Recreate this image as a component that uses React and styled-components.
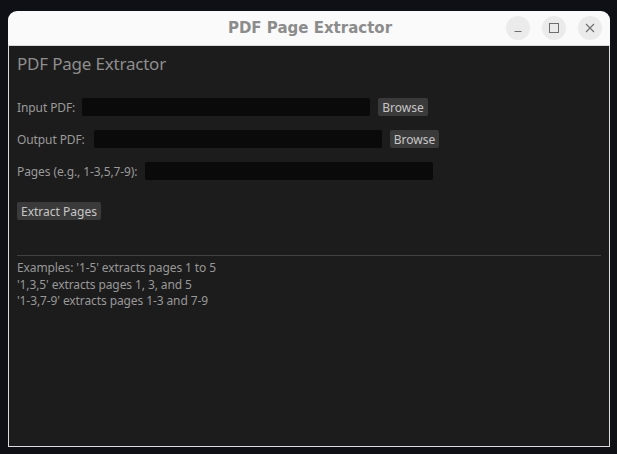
import React from 'react';
import styled, { createGlobalStyle } from 'styled-components';

const GlobalStyle = createGlobalStyle`
  html, body {
    margin: 0;
    padding: 0;
    background: #0e1015;
    height: 100%;
  }
  body {
    font-family: 'Noto Sans', 'DejaVu Sans', sans-serif;
  }
`;

const Desktop = styled.div`
  width: 617px;
  height: 454px;
  padding: 11px 0 0 8px;
  box-sizing: border-box;
`;

const Window = styled.div`
  width: 602px;
  height: 436px;
  display: flex;
  flex-direction: column;
  border-radius: 9px 9px 0 0;
  overflow: hidden;
  background: #fafafa;
`;

const TitleBar = styled.div`
  position: relative;
  height: 34px;
  flex-shrink: 0;
  display: flex;
  align-items: center;
  justify-content: center;
  border-bottom: 1px solid #d8d8d8;
`;

const Title = styled.div`
  font-family: 'DejaVu Sans', sans-serif;
  font-weight: bold;
  font-size: 15px;
  color: #8c8c8c;
  margin-left: 2px;
`;

const Controls = styled.div`
  position: absolute;
  right: 8px;
  top: 5px;
  display: flex;
  gap: 12px;
`;

const CtrlButton = styled.div`
  width: 24px;
  height: 24px;
  border-radius: 50%;
  background: #ebebeb;
  display: flex;
  align-items: center;
  justify-content: center;
`;

const Content = styled.div`
  flex: 1;
  background: #1c1c1c;
  border: 1px solid #dcdcdc;
  border-top: none;
  padding: 7px 8px 0 8px;
  display: flex;
  flex-direction: column;
  font-size: 12px;
  color: #9c9c9c;
`;

const Heading = styled.div`
  font-size: 17px;
  color: #8e8e8e;
  line-height: 22px;
  letter-spacing: -0.2px;
`;

const Form = styled.div`
  margin-top: 23px;
  display: flex;
  flex-direction: column;
  gap: 14px;
`;

const Row = styled.div`
  display: flex;
  align-items: center;
  height: 18px;
`;

const Label = styled.span`
  color: #9a9a9a;
  margin-right: ${p => p.$mr || 8}px;
  letter-spacing: -0.1px;
`;

const Entry = styled.div`
  width: 288px;
  height: 18px;
  background: #0a0a0a;
  border-radius: 2px;
`;

const Button = styled.div`
  height: 18px;
  padding: 0 4px;
  display: flex;
  align-items: center;
  background: #3a3a3a;
  color: #c6c6c6;
  border-radius: 2px;
  margin-left: ${p => p.$ml || 0}px;
`;

const ActionRow = styled.div`
  margin-top: 22px;
  display: flex;
`;

const Separator = styled.div`
  margin-top: 35px;
  height: 1px;
  background: #414141;
  width: 584px;
`;

const Examples = styled.div`
  margin-top: 4px;
  line-height: 16.5px;
  color: #989898;
  letter-spacing: -0.1px;
`;

const App = () => {
  return (
    <>
      <GlobalStyle />
      <Desktop>
        <Window>
          <TitleBar>
            <Title>PDF Page Extractor</Title>
            <Controls>
              <CtrlButton>
                <svg width="10" height="10" viewBox="0 0 10 10">
                  <path d="M1.5 8.5h7" stroke="#6e6e6e" strokeWidth="1.2" />
                </svg>
              </CtrlButton>
              <CtrlButton>
                <svg width="10" height="10" viewBox="0 0 10 10">
                  <rect x="0.5" y="0.5" width="9" height="9" fill="none" stroke="#6e6e6e" strokeWidth="1" />
                </svg>
              </CtrlButton>
              <CtrlButton>
                <svg width="10" height="10" viewBox="0 0 10 10">
                  <path d="M1 1l8 8M9 1l-8 8" stroke="#6e6e6e" strokeWidth="1.1" />
                </svg>
              </CtrlButton>
            </Controls>
          </TitleBar>
          <Content>
            <Heading>PDF Page Extractor</Heading>
            <Form>
              <Row>
                <Label $mr={7}>Input PDF:</Label>
                <Entry />
                <Button $ml={8}>Browse</Button>
              </Row>
              <Row>
                <Label $mr={9}>Output PDF:</Label>
                <Entry />
                <Button $ml={8}>Browse</Button>
              </Row>
              <Row>
                <Label>Pages (e.g., 1-3,5,7-9):</Label>
                <Entry />
              </Row>
            </Form>
            <ActionRow>
              <Button>Extract Pages</Button>
            </ActionRow>
            <Separator />
            <Examples>
              Examples: '1-5' extracts pages 1 to 5<br />
              '1,3,5' extracts pages 1, 3, and 5<br />
              '1-3,7-9' extracts pages 1-3 and 7-9
            </Examples>
          </Content>
        </Window>
      </Desktop>
    </>
  );
};

export default App;
